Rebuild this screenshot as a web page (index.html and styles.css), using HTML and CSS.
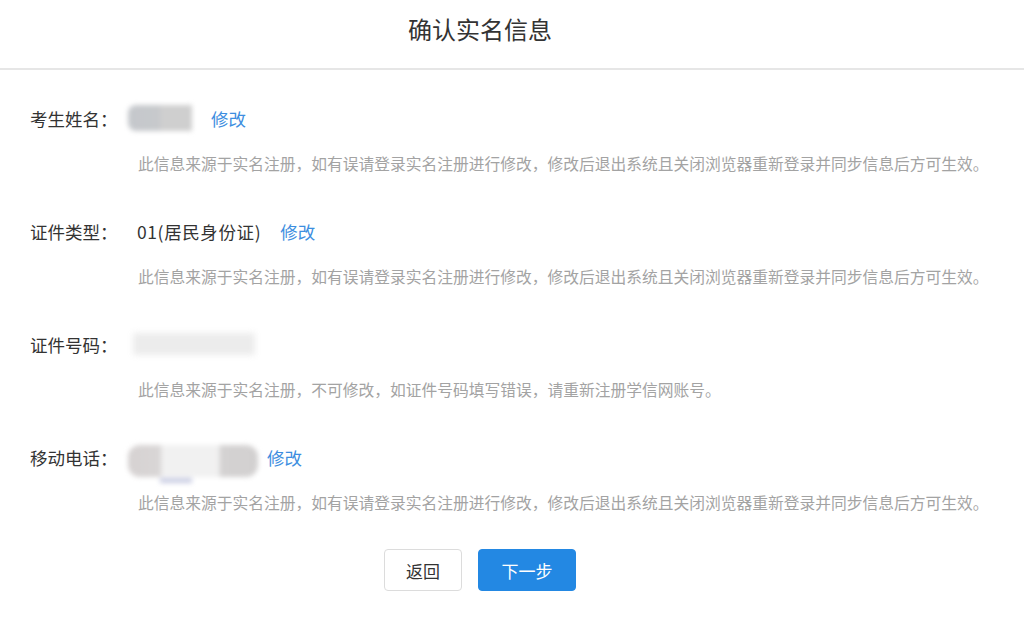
FILE: index.html
```html
<!DOCTYPE html>
<html lang="zh-CN">
<head>
<meta charset="utf-8">
<title>确认实名信息</title>
<link rel="stylesheet" href="styles.css">
</head>
<body>
<div class="page">
  <header class="header">
    <h1 class="title">确认实名信息</h1>
  </header>
  <main class="content">
    <section class="field">
      <div class="line">
        <span class="label">考生姓名：</span>
        <span class="mask mask-name"></span>
        <a class="link link-name" href="#">修改</a>
      </div>
      <p class="hint">此信息来源于实名注册，如有误请登录实名注册进行修改，修改后退出系统且关闭浏览器重新登录并同步信息后方可生效。</p>
    </section>
    <section class="field">
      <div class="line">
        <span class="label">证件类型：</span>
        <span class="value">01(居民身份证)</span>
        <a class="link link-type" href="#">修改</a>
      </div>
      <p class="hint">此信息来源于实名注册，如有误请登录实名注册进行修改，修改后退出系统且关闭浏览器重新登录并同步信息后方可生效。</p>
    </section>
    <section class="field">
      <div class="line">
        <span class="label">证件号码：</span>
        <span class="mask mask-id"></span>
      </div>
      <p class="hint">此信息来源于实名注册，不可修改，如证件号码填写错误，请重新注册学信网账号。</p>
    </section>
    <section class="field">
      <div class="line">
        <span class="label">移动电话：</span>
        <span class="mask mask-phone"><span class="mask-under"></span></span>
        <a class="link link-phone" href="#">修改</a>
      </div>
      <p class="hint">此信息来源于实名注册，如有误请登录实名注册进行修改，修改后退出系统且关闭浏览器重新登录并同步信息后方可生效。</p>
    </section>
    <div class="actions">
      <button class="btn btn-back" type="button">返回</button>
      <button class="btn btn-next" type="button">下一步</button>
    </div>
  </main>
</div>
</body>
</html>
```

FILE: styles.css
```css
* { box-sizing: border-box; }
html, body {
  margin: 0;
  padding: 0;
  background: #fff;
}
body {
  font-family: "Noto Sans CJK SC", "Microsoft YaHei", "Liberation Sans", sans-serif;
  color: #333;
}
.page {
  width: 1024px;
}
.header {
  height: 70px;
  border-bottom: 2px solid #e6e6e6;
  display: flex;
  justify-content: center;
  padding-top: 11px;
  padding-right: 64px;
}
.title {
  margin: 0;
  font-size: 24px;
  font-weight: 400;
  line-height: 36px;
  color: #333;
}
.content {
  padding: 35px 0 0 30px;
  display: flex;
  flex-direction: column;
}
.field {
  display: flex;
  flex-direction: column;
  gap: 21px;
  margin-bottom: 42px;
}
.field:last-of-type {
  margin-bottom: 34px;
}
.line {
  display: flex;
  align-items: center;
  height: 26px;
  font-size: 17.5px;
}
.label {
  width: 107px;
  color: #333;
  flex: none;
}
.value {
  color: #333;
  letter-spacing: 0.6px;
}
.link {
  color: #3d8ee0;
  text-decoration: none;
}
.mask {
  position: relative;
  display: block;
  flex: none;
  filter: blur(2.5px);
}
.mask-name {
  width: 64px;
  height: 26px;
  margin-left: -9px;
  background: linear-gradient(90deg, #c5c8cc 0%, #c7c9cc 50%, #cfcfcf 51%, #cfcfcf 100%);
  border-radius: 8px 0 0 8px;
}
.link-name { margin-left: 19px; }
.link-type { margin-left: 19px; }
.mask-id {
  width: 122px;
  height: 22px;
  margin-left: -4px;
  background: #ececec;
  filter: blur(3px);
}
.mask-phone {
  width: 130px;
  height: 32px;
  margin-left: -9px;
  margin-top: 8px;
  border-radius: 12px;
  background: linear-gradient(90deg, #d6d2d2 0%, #d9d6d6 25%, #f1f1f1 26%, #f1f1f1 70%, #d4d2d2 71%, #d2d0d0 100%);
}
.mask-under {
  position: absolute;
  left: 32px;
  top: 33px;
  width: 32px;
  height: 5px;
  background: #c9cde3;
}
.link-phone { margin-left: 9px; }
.hint {
  margin: 0 0 0 108px;
  font-size: 15.75px;
  line-height: 24px;
  color: #a3a3a3;
  white-space: nowrap;
}
.actions {
  display: flex;
  justify-content: center;
  gap: 16px;
  padding-right: 94px;
}
.btn {
  height: 42px;
  border-radius: 4px;
  font-family: inherit;
  font-size: 17px;
  cursor: pointer;
}
.btn-back {
  width: 78px;
  background: #fff;
  border: 1px solid #dcdcdc;
  color: #333;
}
.btn-next {
  width: 98px;
  background: #2388e3;
  border: 1px solid #2388e3;
  color: #fff;
}
```
